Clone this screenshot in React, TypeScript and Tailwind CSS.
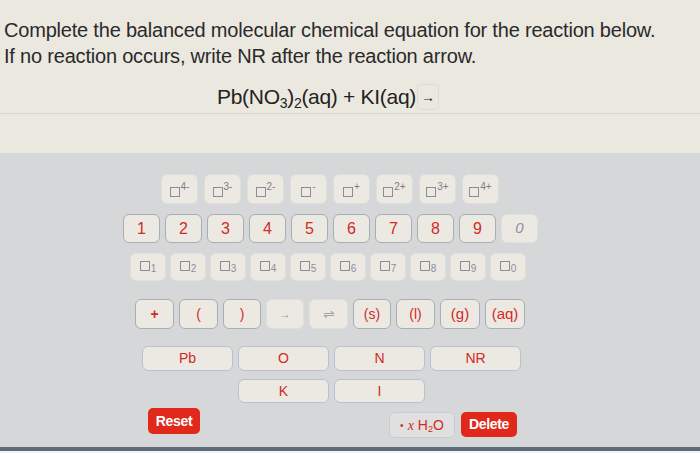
import React from 'react'

const font = { fontFamily: '"Liberation Sans", Arial, sans-serif' }

function Box({ className = '' }: { className?: string }) {
    return <span className={`inline-block w-[10px] h-[10px] border border-[#8a8d99] ${className}`} />
}

function Key({ children, className = '' }: { children: React.ReactNode, className?: string }) {
    return (
        <div className={`flex items-center justify-center rounded-[6px] border bg-[#ebe9e2] ${className}`}>
            {children}
        </div>
    )
}

const charges = ['4-', '3-', '2-', '-', '+', '2+', '3+', '4+']
const digits = ['1', '2', '3', '4', '5', '6', '7', '8', '9']
const subs = ['1', '2', '3', '4', '5', '6', '7', '8', '9', '0']

export default function App() {
    return (
        <div className="w-[700px] h-[453px] overflow-hidden flex flex-col bg-[#d5d7d8]" style={font}>
            <div className="h-[153px] bg-[#ebe8df] flex flex-col">
                <p className="pl-[4px] pt-[19px] text-[20px] leading-[22px] tracking-[-0.2px] text-[#2a2a2c] whitespace-nowrap">
                    Complete the balanced molecular chemical equation for the reaction below.
                </p>
                <p className="pl-[4px] pt-[4px] text-[20px] leading-[22px] tracking-[-0.2px] text-[#2a2a2c] whitespace-nowrap">
                    If no reaction occurs, write NR after the reaction arrow.
                </p>
                <div className="pl-[217px] pt-[17px] flex items-center text-[21px] leading-[24px] tracking-[-0.3px] text-[#222]">
                    <span>Pb(NO<sub className="text-[14px]">3</sub>)<sub className="text-[14px]">2</sub>(aq) + KI(aq)</span>
                    <span className="ml-[1px] w-[22px] h-[26px] rounded-[4px] border border-[#dcdcd6] flex items-center justify-center text-[14px]">→</span>
                </div>
                <div className="mt-[3px] h-[1px] bg-[#d7d6d0]" />
            </div>

            <div className="flex flex-col">
                <div className="flex gap-[6px] pl-[161px] pt-[21px]">
                    {charges.map(c => (
                        <Key key={c} className="w-[37px] h-[30px] border-[#dedfdc] bg-[#ebe9e1]">
                            <span className="flex items-start text-[#7a7e8e]">
                                <Box className="mt-[5px]" />
                                <span className="text-[10px] leading-[10px] ml-[1px]">{c}</span>
                            </span>
                        </Key>
                    ))}
                </div>

                <div className="flex gap-[5px] pl-[123px] pt-[10px]">
                    {digits.map(d => (
                        <Key key={d} className="w-[37px] h-[29px] border-[#a9adb5] text-[16px] text-[#d42a25]">{d}</Key>
                    ))}
                    <Key className="w-[37px] h-[29px] border-[#e0e1de] text-[15px] italic text-[#8e93a4]">0</Key>
                </div>

                <div className="flex gap-[4px] pl-[130px] pt-[10px]">
                    {subs.map(s => (
                        <Key key={s} className="w-[36px] h-[28px] border-[#e0e1de] bg-[#e9e8e2]">
                            <span className="flex items-end text-[#8a8e9d]">
                                <Box className="mb-[3px]" />
                                <span className="text-[10px] leading-[10px] ml-[1px]">{s}</span>
                            </span>
                        </Key>
                    ))}
                </div>

                <div className="flex gap-[5px] pl-[135px] pt-[18px]">
                    <Key className="w-[39px] h-[30px] border-[#a9adb5] text-[14px] font-bold text-[#d42a25]">+</Key>
                    <Key className="w-[39px] h-[30px] border-[#a9adb5] text-[14px] text-[#d42a25]">(</Key>
                    <Key className="w-[38px] h-[30px] border-[#a9adb5] text-[14px] text-[#d42a25]">)</Key>
                    <Key className="w-[38px] h-[30px] border-[#dfe0dd] text-[12px] text-[#9aa0ad]">→</Key>
                    <Key className="w-[39px] h-[30px] border-[#dfe0dd] text-[14px] text-[#9aa0ad]">⇌</Key>
                    <Key className="w-[38px] h-[30px] border-[#a9adb5] text-[14px] text-[#d42a25]">(s)</Key>
                    <Key className="w-[39px] h-[30px] border-[#a9adb5] text-[14px] text-[#d42a25]">(l)</Key>
                    <Key className="w-[40px] h-[30px] border-[#a9adb5] text-[15px] text-[#d42a25]">(g)</Key>
                    <Key className="w-[40px] h-[30px] border-[#a9adb5] text-[15px] text-[#d42a25]">(aq)</Key>
                </div>

                <div className="flex gap-[5px] pl-[142px] pt-[17px]">
                    {['Pb', 'O', 'N', 'NR'].map(e => (
                        <Key key={e} className="w-[91px] h-[25px] border-[#b6c1d1] bg-[#e6e6e2] text-[14px] text-[#d42a25]">{e}</Key>
                    ))}
                </div>

                <div className="flex gap-[5px] pl-[238px] pt-[8px]">
                    {['K', 'I'].map(e => (
                        <Key key={e} className="w-[91px] h-[24px] border-[#b6c1d1] bg-[#e6e6e2] text-[14px] text-[#d42a25]">{e}</Key>
                    ))}
                </div>

                <div className="flex items-start pt-[5px]">
                    <button className="ml-[148px] w-[52px] h-[26px] rounded-[5px] bg-[#e0281b] text-white text-[14px] font-bold tracking-[-0.3px]">Reset</button>
                    <div className="ml-[189px] mt-[4px] w-[66px] h-[26px] rounded-[5px] border border-[#c9ccd2] bg-[#dfe0df] flex items-center justify-center gap-[4px] text-[14px] text-[#d42a25]">
                        <span className="text-[10px]">•</span>
                        <span className="italic" style={{ fontFamily: '"Liberation Serif", serif' }}>x</span>
                        <span>H<sub className="text-[9px]">2</sub>O</span>
                    </div>
                    <button className="ml-[6px] mt-[4px] w-[56px] h-[25px] rounded-[5px] bg-[#e0281b] text-white text-[14px] font-bold tracking-[-0.3px]">Delete</button>
                </div>
            </div>
            <div className="mt-auto h-[4px] bg-[#5f6b78]" />
            <div className="h-[2px] bg-[#f4f4f2]" />
        </div>
    )
}
